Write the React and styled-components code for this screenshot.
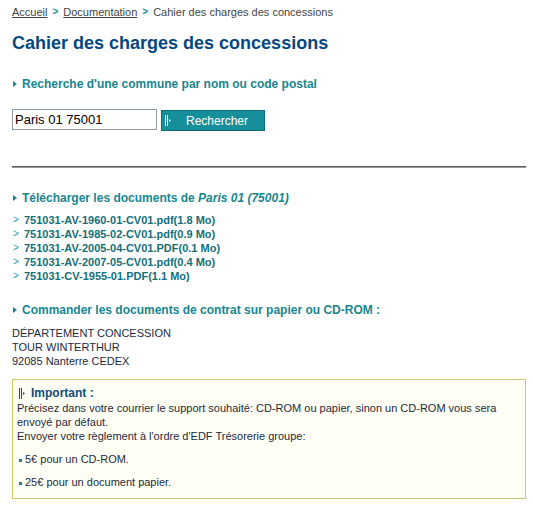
import styled, { createGlobalStyle } from "styled-components";

const GlobalStyle = createGlobalStyle`
  body {
    margin: 0;
    background: #ffffff;
    font-family: "Liberation Sans", Arial, sans-serif;
  }
`;

const documents = [
  { name: "751031-AV-1960-01-CV01.pdf", size: "1.8 Mo" },
  { name: "751031-AV-1985-02-CV01.pdf", size: "0.9 Mo" },
  { name: "751031-AV-2005-04-CV01.PDF", size: "0.1 Mo" },
  { name: "751031-AV-2007-05-CV01.pdf", size: "0.4 Mo" },
  { name: "751031-CV-1955-01.PDF", size: "1.1 Mo" },
];

function BarsIcon({ color }) {
  return (
    <svg width="8" height="11" viewBox="0 0 8 11">
      <rect x="0" y="0" width="1" height="11" fill={color} />
      <rect x="2" y="0" width="1" height="11" fill={color} />
      <path d="M4 4 L6 5.5 L4 7 Z" fill={color} />
    </svg>
  );
}

function App() {
  return (
    <Page>
      <GlobalStyle />
      <Breadcrumb>
        <CrumbLink href="#">Accueil</CrumbLink>
        <CrumbSep>&gt;</CrumbSep>
        <CrumbLink href="#">Documentation</CrumbLink>
        <CrumbSep>&gt;</CrumbSep>
        <span>Cahier des charges des concessions</span>
      </Breadcrumb>

      <Title>Cahier des charges des concessions</Title>

      <Heading $top={23}>Recherche d'une commune par nom ou code postal</Heading>

      <SearchForm onSubmit={(e) => e.preventDefault()}>
        <SearchInput defaultValue="Paris 01 75001" />
        <SearchButton type="submit">
          <BarsIcon color="#ffffff" />
          <span>Rechercher</span>
        </SearchButton>
      </SearchForm>

      <Rule />

      <Heading $top={23}>
        Télécharger les documents de <em>Paris 01 (75001)</em>
      </Heading>

      <DocList>
        {documents.map((d) => (
          <DocItem key={d.name}>
            <DocArrow>&gt;</DocArrow>
            <DocLink href="#">
              {d.name}({d.size})
            </DocLink>
          </DocItem>
        ))}
      </DocList>

      <Heading $top={20}>Commander les documents de contrat sur papier ou CD-ROM :</Heading>

      <Address>
        DÉPARTEMENT CONCESSION
        <br />
        TOUR WINTERTHUR
        <br />
        92085 Nanterre CEDEX
      </Address>

      <NoticeBox>
        <NoticeTitle>
          <BarsIcon color="#124a7a" />
          Important :
        </NoticeTitle>
        <NoticeText>
          Précisez dans votre courrier le support souhaité: CD-ROM ou papier, sinon un CD-ROM vous sera
          envoyé par défaut.
          <br />
          Envoyer votre règlement à l'ordre d'EDF Trésorerie groupe:
        </NoticeText>
        <PriceList>
          <PriceItem>5€ pour un CD-ROM.</PriceItem>
          <PriceItem>25€ pour un document papier.</PriceItem>
        </PriceList>
      </NoticeBox>
    </Page>
  );
}

const Page = styled.div`
  padding: 5px 7px 8px 12px;
  width: 533px;
  box-sizing: border-box;
`;

const Breadcrumb = styled.div`
  display: flex;
  align-items: center;
  font-size: 11px;
  line-height: 14px;
  color: #444444;
`;

const CrumbLink = styled.a`
  color: #444444;
  text-decoration: underline;
`;

const CrumbSep = styled.span`
  color: #1a8c98;
  font-weight: bold;
  font-size: 10px;
  margin: 0 5px;
`;

const Title = styled.h1`
  margin: 13px 0 0;
  font-size: 18px;
  line-height: 22px;
  font-weight: bold;
  color: #05487f;
`;

const Heading = styled.h2`
  position: relative;
  margin: ${(p) => p.$top}px 0 0;
  padding-left: 10px;
  font-size: 12px;
  line-height: 14px;
  font-weight: bold;
  color: #17868f;

  &::before {
    content: "";
    position: absolute;
    left: 1px;
    top: 4px;
    border-left: 4px solid #17868f;
    border-top: 3px solid transparent;
    border-bottom: 3px solid transparent;
  }

  em {
    font-style: italic;
  }
`;

const SearchForm = styled.form`
  display: flex;
  align-items: flex-start;
  gap: 4px;
  margin-top: 18px;
`;

const SearchInput = styled.input`
  box-sizing: border-box;
  width: 145px;
  height: 21px;
  margin: 0;
  padding: 0 2px;
  border: 1px solid #8d9ba6;
  font-family: "Liberation Sans", Arial, sans-serif;
  font-size: 13px;
  color: #000000;
  outline: none;
`;

const SearchButton = styled.button`
  box-sizing: border-box;
  display: flex;
  align-items: center;
  gap: 13px;
  width: 104px;
  height: 21px;
  margin: 1px 0 0;
  padding: 0 0 0 3px;
  border: 1px solid #0d6b75;
  background: #178f9b;
  color: #ffffff;
  font-family: "Liberation Sans", Arial, sans-serif;
  font-size: 12px;
  cursor: pointer;
`;

const Rule = styled.hr`
  margin: 35px 0 0;
  border: 0;
  height: 1px;
  border-top: 1px solid #5a5a5a;
  background: #9a9a9a;
`;

const DocList = styled.ul`
  list-style: none;
  margin: 8px 0 0;
  padding: 0;
`;

const DocItem = styled.li`
  display: flex;
  font-size: 11px;
  line-height: 14px;
`;

const DocArrow = styled.span`
  color: #2a9aa5;
  width: 11px;
  padding-left: 1px;
  font-size: 10px;
`;

const DocLink = styled.a`
  color: #136f7a;
  font-weight: bold;
  text-decoration: none;
`;

const Address = styled.p`
  margin: 9px 0 0;
  font-size: 11px;
  line-height: 14px;
  color: #1c2a3a;
`;

const NoticeBox = styled.div`
  margin-top: 11px;
  padding: 6px 4px 9px;
  border: 1px solid #c9c96a;
  background: #fffff6;
`;

const NoticeTitle = styled.div`
  display: flex;
  align-items: center;
  gap: 4px;
  padding-left: 2px;
  font-size: 12px;
  line-height: 14px;
  font-weight: bold;
  color: #124a7a;
`;

const NoticeText = styled.p`
  margin: 1px 0 0;
  font-size: 11px;
  line-height: 14px;
  color: #1c2a3a;
`;

const PriceList = styled.ul`
  list-style: none;
  margin: 0;
  padding: 0;
`;

const PriceItem = styled.li`
  position: relative;
  margin-top: 9px;
  padding-left: 8px;
  font-size: 11px;
  line-height: 14px;
  color: #1c2a3a;

  &::before {
    content: "";
    position: absolute;
    left: 2px;
    top: 7px;
    width: 3px;
    height: 3px;
    background: #2a7a86;
  }
`;

export default App;
